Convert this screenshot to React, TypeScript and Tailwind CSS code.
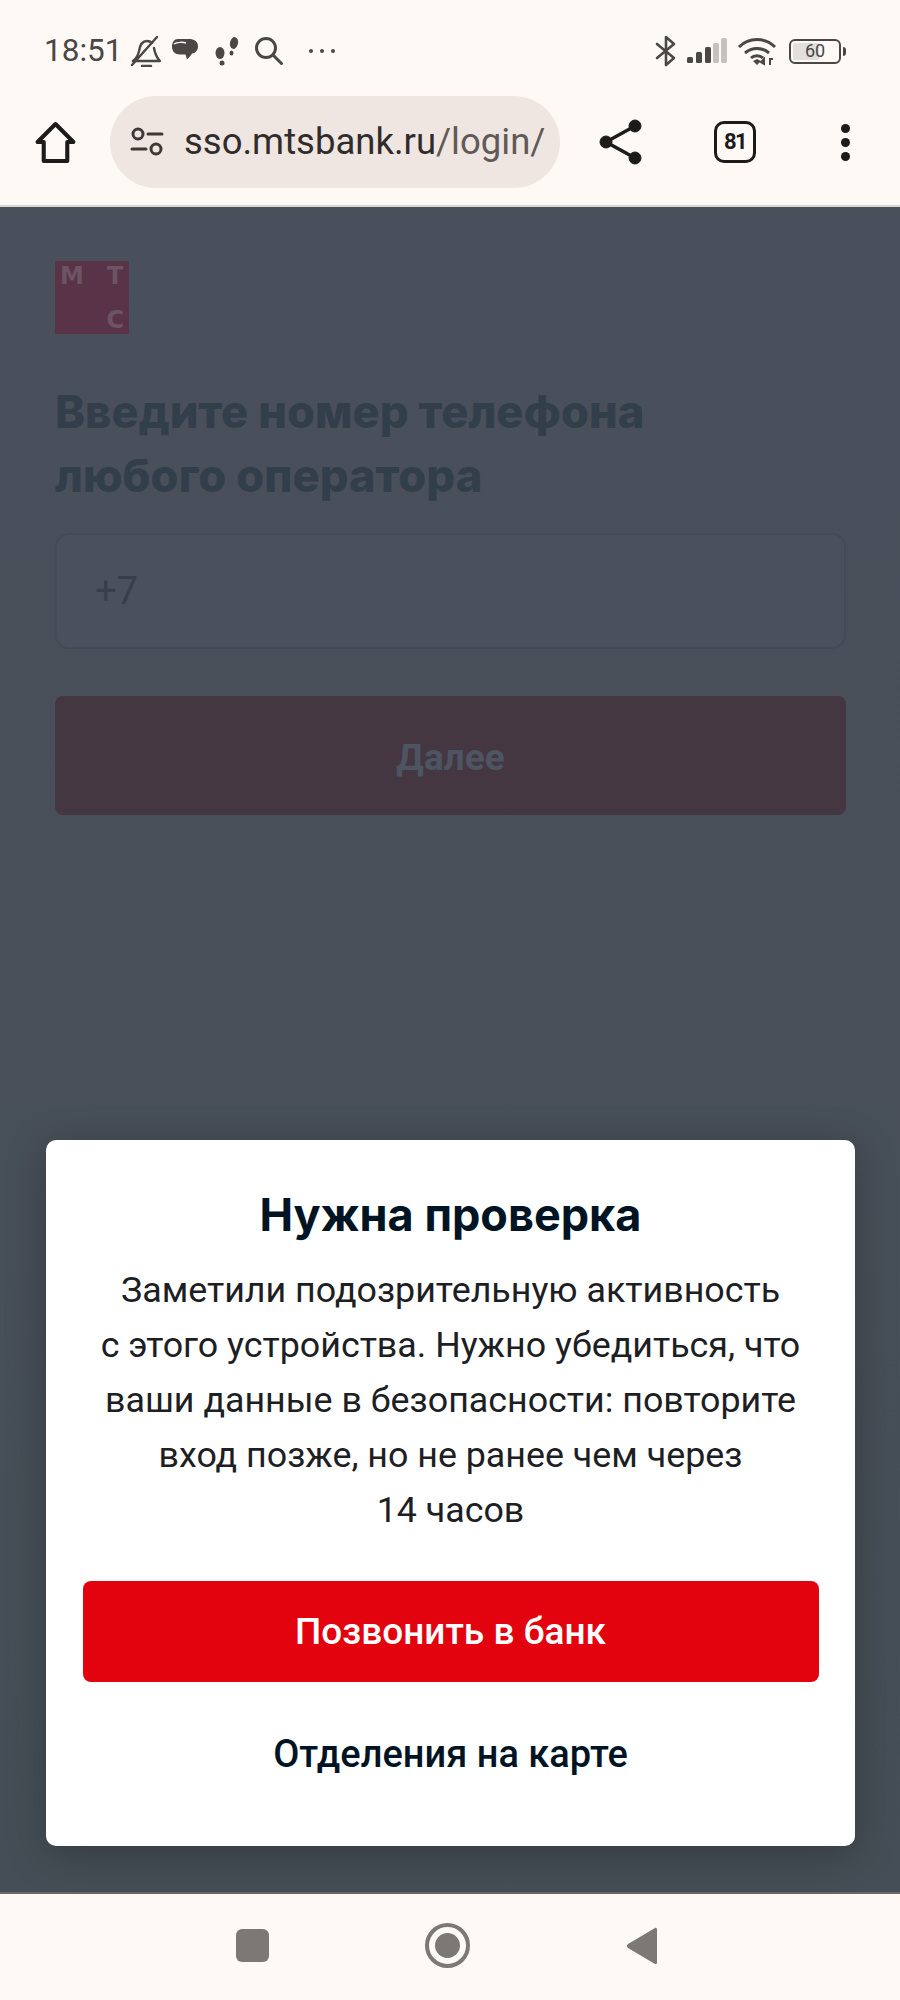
const sans = "font-['Roboto','Liberation_Sans',sans-serif]";
const inter = "font-['Inter','Liberation_Sans',sans-serif]";

function StatusIcons() {
  return (
    <div className="flex items-center">
      <svg width="32" height="32" viewBox="0 0 32 32" fill="none" stroke="#4a4745" strokeWidth="2.4" strokeLinecap="round" strokeLinejoin="round" className="ml-[8px]">
        <path d="M3 26c3-2 5-5 6-10 1-6 4-10 8-10 2 0 4 1 5 2" />
        <path d="M24 13c1 6 3 10 6 13H3" />
        <path d="M2 30 27 2" />
        <path d="M12 31h9" />
      </svg>
      <svg width="28" height="28" viewBox="0 0 28 28" className="ml-[9px]">
        <path fill="#4a4745" d="M7 2h11c5 0 9 2.500 9 7 0 4-2 7-6 7.500-1 2-3 4-5 6l-1.500-5H9c-5 0-8-3-8-8C1 5.500 3 2 7 2Z" />
        <path fill="none" stroke="#fef9f5" strokeWidth="1.500" d="M3 7c3-2 9-2 12-1" />
      </svg>
      <svg width="26" height="32" viewBox="0 0 26 32" className="ml-[15px]">
        <ellipse cx="6" cy="18" rx="4.500" ry="6" fill="#4a4745" />
        <ellipse cx="8" cy="28" rx="2.500" ry="2.500" fill="#4a4745" />
        <ellipse cx="20" cy="8" rx="4" ry="6" fill="#4a4745" transform="rotate(12 20 8)" />
        <ellipse cx="17.500" cy="18" rx="2" ry="2.500" fill="#4a4745" />
      </svg>
      <svg width="30" height="30" viewBox="0 0 30 30" fill="none" stroke="#4a4745" strokeWidth="3" strokeLinecap="round" className="ml-[14px]">
        <circle cx="12" cy="12" r="9.500" />
        <path d="m19 19 8.500 8.500" />
      </svg>
      <div className="ml-[25px] flex gap-[7px]">
        <span className="h-[4px] w-[4px] rounded-full bg-[#4a4745]" />
        <span className="h-[4px] w-[4px] rounded-full bg-[#4a4745]" />
        <span className="h-[4px] w-[4px] rounded-full bg-[#4a4745]" />
      </div>
    </div>
  );
}

function SystemIcons() {
  return (
    <div className="flex items-center">
      <svg width="22" height="34" viewBox="0 0 22 34" fill="none" stroke="#4a4745" strokeWidth="2.600" strokeLinejoin="round" strokeLinecap="round">
        <path d="m2 10 17 14-8 7V3l8 7-17 14" />
      </svg>
      <svg width="40" height="26" viewBox="0 0 40 26" className="ml-[10px]">
        <rect x="0" y="19" width="6" height="6" rx="1.500" fill="#4a4745" />
        <rect x="9" y="14" width="6" height="11" rx="1.500" fill="#4a4745" />
        <rect x="18" y="9" width="6" height="16" rx="1.500" fill="#4a4745" />
        <rect x="26" y="5" width="6" height="20" rx="1.500" fill="#c4c1be" />
        <rect x="34" y="0" width="6" height="25" rx="1.500" fill="#c4c1be" />
      </svg>
      <svg width="40" height="30" viewBox="0 0 40 30" fill="none" className="ml-[10px]">
        <path d="M2 11c10-10 26-10 36 0M8 17c7-6 17-6 24 0M14 22c3-3 9-3 12 0" stroke="#4a4745" strokeWidth="3" />
        <path d="m16 25 4-2 4 2-4 4Z" fill="#4a4745" />
        <path d="M27 28v-5l-3 3ZM33 22v7M33 23h3" stroke="#4a4745" strokeWidth="2" />
      </svg>
      <div className="ml-[12px] flex items-center">
        <div className="flex h-[25px] w-[52px] items-center rounded-[6px] border-2 border-[#4a4745] p-[2px]">
          <div className="relative flex h-full w-[60%] items-center rounded-[2px] bg-[#e2dfdc]">
            <span className={`${sans} absolute left-[12px] text-[18px] leading-none text-[#4a4745]`}>60</span>
          </div>
        </div>
        <span className="ml-[2px] h-[9px] w-[3px] rounded-r-sm bg-[#4a4745]" />
      </div>
    </div>
  );
}

function Toolbar() {
  return (
    <div className="flex h-[117px] items-start pl-[34px] pt-[6px]">
      <div className="flex h-[92px] items-center">
        <svg width="43" height="43" viewBox="0 0 41 42" fill="none" stroke="#1d1b1a" strokeWidth="4" strokeLinejoin="round">
          <path d="M20.500 3 3 20.500h6V39h23V20.500h6Z" />
        </svg>
      </div>
      <div className="ml-[33px] flex h-[92px] w-[450px] items-center overflow-hidden rounded-full bg-[#efe6e2] pl-[20px]">
        <svg width="34" height="30" viewBox="0 0 34 30" fill="none" stroke="#3c3937" strokeWidth="3" strokeLinecap="round">
          <circle cx="8" cy="7" r="5" />
          <path d="M18 7h14M2 22h14" />
          <circle cx="26" cy="22" r="5" />
        </svg>
        <span className={`${sans} ml-[20px] text-[36.500px] leading-none whitespace-nowrap text-[#2f2c2b]`}>
          sso.mtsbank.ru<span className="text-[#5f5a57]">/login/</span>
        </span>
      </div>
      <div className="flex h-[92px] items-center">
        <svg width="44" height="46" viewBox="0 0 44 46" className="ml-[39px]" fill="#1d1b1a" stroke="#1d1b1a">
          <circle cx="7" cy="23" r="6" />
          <circle cx="36" cy="7" r="6" />
          <circle cx="36" cy="39" r="6" />
          <path d="M7 23 36 7M7 23l29 16" fill="none" strokeWidth="3.500" />
        </svg>
        <div className="ml-[71px] flex h-[42px] w-[42px] items-center justify-center rounded-[10px] border-[3.500px] border-[#1d1b1a]">
          <span className={`${sans} text-[22px] leading-none font-bold tracking-[-1.500px] text-[#1d1b1a]`}>81</span>
        </div>
        <div className="ml-[85px] flex flex-col gap-[5px]">
          <span className="h-[9px] w-[9px] rounded-full bg-[#1d1b1a]" />
          <span className="h-[9px] w-[9px] rounded-full bg-[#1d1b1a]" />
          <span className="h-[9px] w-[9px] rounded-full bg-[#1d1b1a]" />
        </div>
      </div>
    </div>
  );
}

function BackgroundPage() {
  return (
    <div className="px-[55px] pt-[54px]">
      <div className="flex h-[73px] w-[74px] flex-col justify-between bg-[#593347] px-[5px] pt-[3px] pb-[2px] font-['DejaVu_Sans',sans-serif] text-[24px] leading-none font-bold text-[#6d5464]">
        <div className="flex justify-between">
          <span>М</span>
          <span className="pr-[1px]">Т</span>
        </div>
        <span className="self-end">С</span>
      </div>
      <h1 className={`${inter} mt-[46px] text-[45.300px] leading-[64px] font-extrabold whitespace-nowrap text-[#333e4b]`}>
        Введите номер телефона
        <br />
        любого оператора
      </h1>
      <div className={`${sans} mt-[25px] flex h-[116px] w-[791px] items-center rounded-[14px] border-2 border-[#444b56] bg-[#4a515c] pl-[38px] text-[38px] text-[#373f4a]`}>
        +7
      </div>
      <div className={`${sans} mt-[47px] flex h-[119px] w-[791px] items-center justify-center rounded-[8px] bg-[#453741] pt-[5px] text-[37px] font-bold text-[#4c5561]`}>
        Далее
      </div>
    </div>
  );
}

function CheckDialog() {
  return (
    <div className={`${sans} absolute top-[933px] left-[46px] flex h-[706px] w-[809px] flex-col items-center rounded-[10px] bg-white px-[37px] pt-[49px] shadow-[0_8px_40px_rgba(0,0,0,0.25)]`}>
      <h2 className={`${inter} text-[45px] leading-[52px] font-bold text-[#001424]`}>Нужна проверка</h2>
      <p className="mt-[22px] text-center text-[35.800px] leading-[55px] whitespace-nowrap text-[#1d2023]">
        Заметили подозрительную активность
        <br />
        с этого устройства. Нужно убедиться, что
        <br />
        ваши данные в безопасности: повторите
        <br />
        вход позже, но не ранее чем через
        <br />
        14 часов
      </p>
      <button className="mt-[43px] flex h-[101px] w-[736px] items-center justify-center rounded-[8px] bg-[#e2030f] text-[37px] font-medium text-white">
        Позвонить в банк
      </button>
      <button className="mt-[21px] flex h-[102px] w-[736px] items-center justify-center text-[38px] font-medium text-[#001424]">
        Отделения на карте
      </button>
    </div>
  );
}

export default function App() {
  return (
    <div className="flex h-[2000px] w-[900px] flex-col overflow-hidden bg-[#fef9f5]">
      <div className="h-[207px] shrink-0 border-b-2 border-[#d9d6d3]">
        <div className="flex h-[90px] items-center justify-between pt-[12px] pr-[54px] pl-[44px]">
          <div className="flex items-center">
            <span className={`${sans} text-[31.500px] leading-none text-[#4a4745]`}>18:51</span>
            <StatusIcons />
          </div>
          <SystemIcons />
        </div>
        <Toolbar />
      </div>
      <div className="relative h-[1685px] shrink-0 bg-linear-to-b from-[#4a505b] to-[#454e56]">
        <BackgroundPage />
        <CheckDialog />
      </div>
      <div className="flex h-[108px] flex-1 items-center justify-center gap-[156px] border-t-2 border-[#6a6765] pr-[7px] pb-[3px]">
        <span className="h-[33px] w-[33px] rounded-[6px] bg-[#7b7875]" />
        <span className="flex h-[45px] w-[45px] items-center justify-center rounded-full border-[4px] border-[#7b7875]">
          <span className="h-[25px] w-[25px] rounded-full bg-[#7b7875]" />
        </span>
        <svg width="32" height="38" viewBox="0 0 32 38">
          <path d="M29 1c1.500-.5 2 .5 2 1.500v33c0 1-.5 2-2 1.500L2 21c-1.500-1-1.500-3 0-4Z" fill="#7b7875" />
        </svg>
      </div>
    </div>
  );
}
